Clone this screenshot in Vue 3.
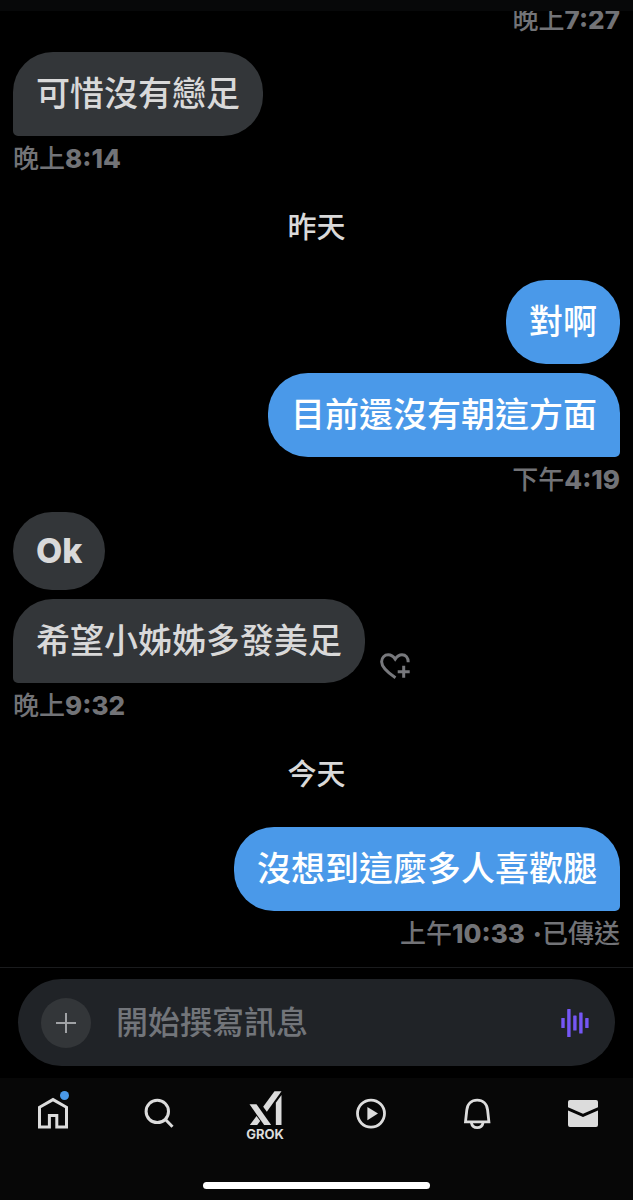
<script setup>
import { ref } from 'vue';

const draft = ref('');

const thread = [
  { type: 'group', mine: true, bubbles: [], period: '晚上', time: '7:27' },
  { type: 'group', mine: false, bubbles: ['可惜沒有戀足'], period: '晚上', time: '8:14' },
  { type: 'day', label: '昨天' },
  { type: 'group', mine: true, bubbles: ['對啊', '目前還沒有朝這方面'], period: '下午', time: '4:19' },
  { type: 'group', mine: false, bubbles: ['Ok', '希望小姊姊多發美足'], period: '晚上', time: '9:32', react: true },
  { type: 'day', label: '今天' },
  { type: 'group', mine: true, bubbles: ['沒想到這麼多人喜歡腿'], period: '上午', time: '10:33', status: '已傳送' },
];

function isLatin(text) {
  return /^[\x20-\x7e]+$/.test(text);
}
</script>

<template>
  <div class="screen">
    <header class="topbar"></header>

    <main class="thread">
      <template v-for="(item, i) in thread" :key="i">
        <h2 v-if="item.type === 'day'" class="day">{{ item.label }}</h2>
        <section v-else class="group" :class="{ mine: item.mine }">
          <div v-if="item.bubbles.length" class="bubbles">
            <div v-for="(text, j) in item.bubbles" :key="j" class="row">
              <p
                class="bubble"
                :class="{ tail: j === item.bubbles.length - 1, latin: isLatin(text) }"
              >{{ text }}</p>
              <button
                v-if="item.react && j === item.bubbles.length - 1"
                class="react"
                aria-label="新增回應"
              >
                <svg width="32" height="28" viewBox="0 0 32 28" fill="none" stroke="currentColor" stroke-width="3">
                  <path d="M15.500 25.800C8 20.800 1.600 15.800 1.600 9.800C1.600 5.500 4.600 2.800 8.200 2.800C11.400 2.800 13.500 4.600 15.200 7.100C16.900 4.600 19 2.800 22 2.800C25.600 2.800 28.200 5.500 28.200 10.300" />
                  <path d="M23.700 13.800v12M17.700 19.800h12" />
                </svg>
              </button>
            </div>
          </div>
          <p class="time">
            {{ item.period }}<b>{{ item.time }}</b><template v-if="item.status"><b class="dot">·</b>{{ item.status }}</template>
          </p>
        </section>
      </template>
    </main>

    <form class="composer" @submit.prevent>
      <div class="field">
        <button type="button" class="add" aria-label="新增附件">
          <svg width="20" height="20" viewBox="0 0 20 20" stroke="currentColor" stroke-width="2">
            <path d="M10 0v20M0 10h20" />
          </svg>
        </button>
        <input v-model="draft" type="text" placeholder="開始撰寫訊息" aria-label="開始撰寫訊息" />
        <button type="button" class="voice" aria-label="語音訊息">
          <svg width="28" height="28" viewBox="0 0 28 28" fill="currentColor">
            <rect x="0.300" y="9" width="3.400" height="10" rx="0.600" />
            <rect x="6.200" y="0" width="3.400" height="28" rx="0.600" />
            <rect x="12.200" y="6.500" width="3.400" height="15" rx="0.600" />
            <rect x="18.200" y="3.500" width="3.400" height="21" rx="0.600" />
            <rect x="24.200" y="9" width="3.400" height="10" rx="0.600" />
          </svg>
        </button>
      </div>
    </form>

    <nav class="tabbar">
      <div class="tabs">
        <a href="#home" class="tab" aria-label="首頁">
          <span class="badged">
            <svg width="36" height="36" viewBox="0 0 36 36" fill="none" stroke="currentColor" stroke-width="3">
              <path d="M4.500 32V12.300L18 4.600l13.500 7.700V32h-9.700V20.500h-7.400V32z" />
            </svg>
            <i class="badge"></i>
          </span>
        </a>
        <a href="#search" class="tab" aria-label="搜尋">
          <svg width="36" height="36" viewBox="0 0 36 36" fill="none" stroke="currentColor" stroke-width="3">
            <circle cx="16.300" cy="16.400" r="11.200" />
            <path d="M24.200 24.300l7.300 7.400" />
          </svg>
        </a>
        <a href="#grok" class="tab grok">
          <svg width="33" height="34" viewBox="57 46 98 102" fill="currentColor">
            <path d="M58 86h21l44 62h-21z" />
            <path d="M79 121l11 15-9 12H59z" />
            <path d="M133 47h21l-44 61-11-15z" />
            <path d="M137 81l17-23v90h-17z" />
          </svg>
          <span>GROK</span>
        </a>
        <a href="#video" class="tab" aria-label="影片">
          <svg width="36" height="36" viewBox="0 0 36 36">
            <circle cx="18" cy="18.600" r="13.500" fill="none" stroke="currentColor" stroke-width="2.800" />
            <path d="M14.400 11.900l10.600 6.700-10.600 6.700z" fill="currentColor" />
          </svg>
        </a>
        <a href="#notifications" class="tab" aria-label="通知">
          <svg width="36" height="36" viewBox="0 0 36 36" fill="none" stroke="currentColor" stroke-width="2.800">
            <path d="M6.500 26.800L7.800 15C8.400 8.800 12.500 5.200 18.200 5.200S28 8.800 28.600 15l1.300 11.800z" />
            <path d="M12.300 27.500c.6 3.300 3 5.200 5.900 5.200s5.300-1.900 5.900-5.200" />
          </svg>
        </a>
        <a href="#messages" class="tab" aria-label="訊息">
          <svg width="36" height="36" viewBox="0 0 36 36" fill="currentColor">
            <path d="M5 5h26a2 2 0 0 1 2 2v5.300l-15 6.500-15-6.500V7a2 2 0 0 1 2-2z" />
            <path d="M3 15.400l15 6.500 15-6.500V30a2 2 0 0 1-2 2H5a2 2 0 0 1-2-2z" />
          </svg>
        </a>
      </div>
      <div class="indicator"></div>
    </nav>
  </div>
</template>

<style>
body {
  margin: 0;
  background: #000;
}
</style>

<style scoped>
.screen {
  display: flex;
  flex-direction: column;
  height: 100vh;
  overflow: hidden;
  background: #000;
  color: #d9d9d9;
  font-family: Inter, 'Noto Sans CJK TC', sans-serif;
  font-weight: 500;
}

button {
  padding: 0;
  border: none;
  background: none;
  color: inherit;
}

svg {
  display: block;
}

.topbar {
  flex: none;
  height: 11px;
  background: #070809;
}

/* newest messages stay at the bottom, older ones run under the top bar */
.thread {
  flex: 1;
  min-height: 0;
  display: flex;
  flex-direction: column;
  justify-content: flex-end;
  gap: 17px;
  padding: 0 13px 18px;
  overflow: hidden;
}

.day {
  margin: 17px 0 15px;
  font-size: 29px;
  line-height: 40px;
  font-weight: 500;
  text-align: center;
}

.group,
.bubbles {
  display: flex;
  flex-direction: column;
  align-items: flex-start;
}

.group {
  gap: 8px;
}

.bubbles {
  gap: 9px;
}

.mine,
.mine .bubbles {
  align-items: flex-end;
}

.row {
  display: flex;
  align-items: flex-end;
  gap: 15px;
}

.bubble {
  margin: 0;
  padding: 22px 23px;
  border-radius: 40px;
  background: #333639;
  font-size: 34px;
  line-height: 40px;
}

.bubble.latin {
  font-weight: 800;
  line-height: 34px;
}

.bubble.tail {
  border-bottom-left-radius: 5px;
}

.mine .bubble {
  background: #4a99e9;
  color: #fff;
}

.mine .bubble.tail {
  border-bottom-left-radius: 40px;
  border-bottom-right-radius: 5px;
}

.react {
  margin-bottom: 3px;
  color: #77787c;
}

.time {
  margin: 0;
  color: #727377;
  font-size: 26px;
  line-height: 30px;
}

.time b {
  font-weight: 800;
}

.time .dot {
  margin-left: 8px;
}

.composer {
  flex: none;
  padding: 11px 18px 12px;
  border-top: 1px solid #1a1b1d;
}

.field {
  display: flex;
  align-items: center;
  height: 87px;
  padding: 0 26px 0 23px;
  box-sizing: border-box;
  border-radius: 44px;
  background: #202327;
}

.add {
  flex: none;
  display: grid;
  place-items: center;
  width: 50px;
  height: 50px;
  border-radius: 50%;
  background: #333639;
  color: #a0a2a5;
}

.field input {
  flex: 1;
  min-width: 0;
  margin: 0 25px;
  padding: 0;
  border: none;
  outline: none;
  background: none;
  color: #d9d9d9;
  font: inherit;
  font-size: 32px;
}

.field input::placeholder {
  color: #72757a;
  opacity: 1;
}

.voice {
  flex: none;
  color: #7557f5;
}

.tabbar {
  flex: none;
  padding-bottom: 11px;
  background: #070707;
}

.tabs {
  display: flex;
  height: 104px;
  margin-right: -3px;
}

.tab {
  flex: 1;
  display: flex;
  flex-direction: column;
  align-items: center;
  padding-top: 17px;
  color: #dcdcdc;
  text-decoration: none;
}

.tab.grok {
  padding-top: 13px;
}

.grok span {
  margin-top: 2px;
  font-size: 13px;
  line-height: 14px;
  font-weight: 700;
}

.badged {
  position: relative;
}

.badge {
  position: absolute;
  top: -4px;
  right: 2px;
  width: 9px;
  height: 9px;
  border-radius: 50%;
  background: #4a99e9;
}

.indicator {
  width: 36%;
  height: 7px;
  margin: 0 auto;
  border-radius: 4px;
  background: #fff;
}
</style>
